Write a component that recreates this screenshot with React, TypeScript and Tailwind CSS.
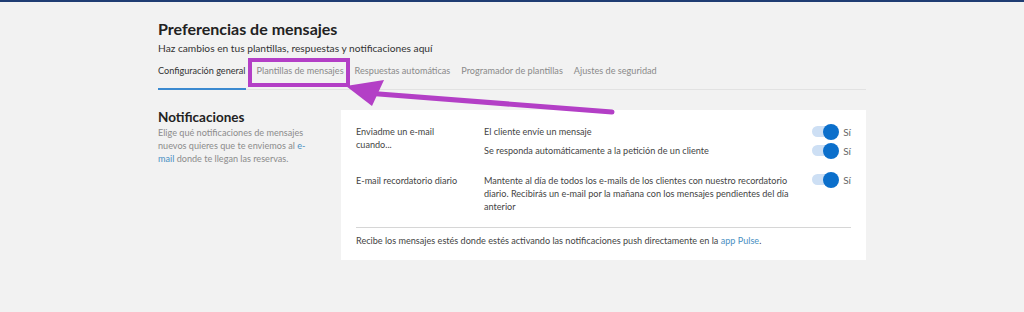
import React from "react";

function Toggle() {
  return (
    <div className="flex items-center gap-[7px]">
      <div className="relative w-[24px] h-[11px] rounded-full bg-[#cddff4]">
        <div className="absolute right-[-3px] top-1/2 -translate-y-1/2 w-[16px] h-[16px] rounded-full bg-[#0b6fcb]" />
      </div>
      <span className="text-[10px] text-[#666] leading-none">Sí</span>
    </div>
  );
}

export default function App() {
  const tabs = [
    "Plantillas de mensajes",
    "Respuestas automáticas",
    "Programador de plantillas",
    "Ajustes de seguridad",
  ];
  return (
    <div className="relative w-[1024px] h-[312px] overflow-hidden bg-[#f2f2f2] font-['Lato',sans-serif] text-[#333]">
      <div className="h-[2px] bg-[#1f3d73]" />
      <div className="pl-[158px] pr-[158px] pt-[16px]">
        <h1 className="text-[16px] font-bold leading-[22px] text-[#222]">Preferencias de mensajes</h1>
        <p className="mt-[1px] text-[10.2px] leading-[14px] text-[#333] whitespace-nowrap">
          Haz cambios en tus plantillas, respuestas y notificaciones aquí
        </p>
        <div className="mt-[9px] flex gap-[11px] border-b border-[#e2e2e2] text-[9.15px] leading-[14px] whitespace-nowrap">
          <div className="border-b-2 border-[#3b8ad0] -mb-px pb-[10px] text-[#333]">Configuración general</div>
          {tabs.map((t) => (
            <div key={t} className="pb-[10px] text-[#8a8a8a]">{t}</div>
          ))}
        </div>
        <div className="mt-[20px] flex">
          <div className="w-[183px] -mt-[1px]">
            <h2 className="text-[13.5px] font-bold leading-[16px] text-[#222]">Notificaciones</h2>
            <p className="mt-[1px] text-[9.1px] leading-[13px] text-[#8c8c8c] whitespace-nowrap">
              Elige qué notificaciones de mensajes
              <br />
              nuevos quieres que te enviemos al <span className="text-[#4a90c2]">e-</span>
              <br />
              <span className="text-[#4a90c2]">mail</span> donde te llegan las reservas.
            </p>
          </div>
          <div className="flex-1 bg-white px-[15px] pt-[15px] pb-[13px] text-[9.1px] leading-[13px] text-[#444] whitespace-nowrap">
            <div className="flex">
              <div className="w-[128px]">
                Enviadme un e-mail
                <br />
                cuando...
              </div>
              <div className="flex-1 flex flex-col gap-[6px]">
                <div className="flex items-center justify-between">
                  <span>El cliente envíe un mensaje</span>
                  <Toggle />
                </div>
                <div className="flex items-center justify-between">
                  <span>Se responda automáticamente a la petición de un cliente</span>
                  <Toggle />
                </div>
              </div>
            </div>
            <div className="mt-[17px] flex">
              <div className="w-[128px]">E-mail recordatorio diario</div>
              <div className="flex-1 flex items-start justify-between">
                <span>
                  Mantente al día de todos los e-mails de los clientes con nuestro recordatorio
                  <br />
                  diario. Recibirás un e-mail por la mañana con los mensajes pendientes del día
                  <br />
                  anterior
                </span>
                <Toggle />
              </div>
            </div>
            <div className="mt-[14px] border-t border-[#d6d6d6]" />
            <p className="mt-[6px]">
              Recibe los mensajes estés donde estés activando las notificaciones push directamente en la{" "}
              <span className="text-[#4a90c2]">app Pulse</span>.
            </p>
          </div>
        </div>
      </div>
      <svg className="absolute left-0 top-0 pointer-events-none" width="1024" height="312" viewBox="0 0 1024 312">
        <rect x="250" y="60" width="98" height="25" fill="none" stroke="#b33fc6" strokeWidth="4" />
        <line x1="366" y1="93" x2="612" y2="112" stroke="#b33fc6" strokeWidth="5" strokeLinecap="round" />
        <polygon points="346,86 384,80 372,106" fill="#b33fc6" />
      </svg>
    </div>
  );
}
